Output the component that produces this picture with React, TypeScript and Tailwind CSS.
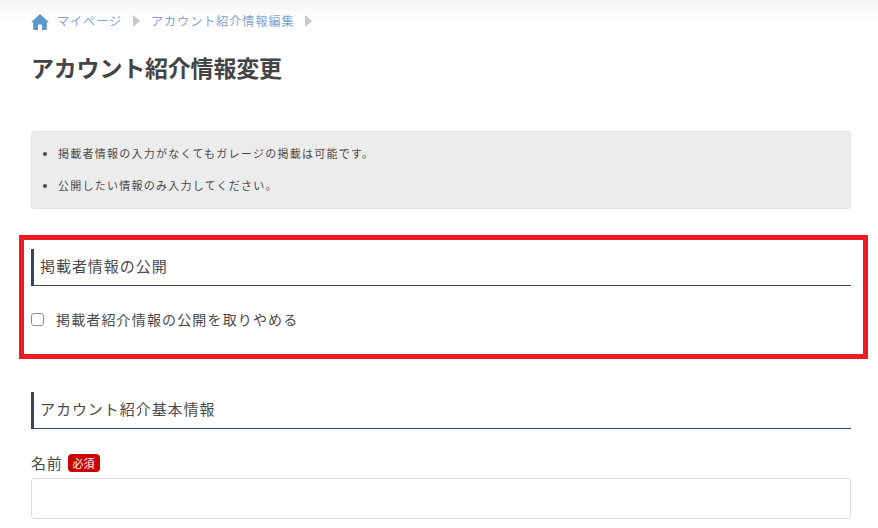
import React from "react";

const jp = "font-['Noto_Sans_CJK_JP','Noto_Sans',sans-serif]";

const Caret: React.FC = () => (
  <svg viewBox="0 0 7 12" className="mb-[2px] h-[12px] w-[7px] shrink-0 fill-[#c4c9d0]">
    <path d="M0 0 L7 6 L0 12 Z" />
  </svg>
);

const SectionHeading: React.FC<{ title: string }> = ({ title }) => (
  <h2 className="flex h-[37px] items-center border-b border-l-[3px] border-b-[#34495e] border-l-[#34495e] pb-[4px] pl-[6px] text-[15px] leading-none font-normal tracking-[0.95px] text-[#4a4a4a]">
    {title}
  </h2>
);

const App: React.FC = () => {
  return (
    <div className={`${jp} h-[528px] overflow-hidden bg-white text-[#4a4a4a]`}>
      <div className="h-[131px] bg-gradient-to-b from-[#f6f6f8] to-white to-[22px] px-[31px] pt-[13px]">
        <nav className="flex h-[18px] items-center text-[12px] leading-none tracking-[1.05px] text-[#7fa4cf]">
          <svg viewBox="0 0 18 16" className="mr-[8px] mb-[1px] h-[16px] w-[18px] fill-[#5c97cc]">
            <path d="M9 0 L18 8.2 L15.8 8.2 L15.8 16 L11 16 L11 10.5 L7 10.5 L7 16 L2.2 16 L2.2 8.2 L0 8.2 Z" />
          </svg>
          <span className="pb-[2px]">マイページ</span>
          <span className="mx-[11px] flex"><Caret /></span>
          <span className="pb-[2px]">アカウント紹介情報編集</span>
          <span className="ml-[10px] flex"><Caret /></span>
        </nav>
        <h1 className="mt-[21px] text-[23px] leading-[30px] font-bold tracking-[-0.2px] text-[#444]">
          アカウント紹介情報変更
        </h1>
      </div>

      <div className="mr-[27px] ml-[31px] h-[78px] rounded-[3px] border border-[#e4e4e4] bg-[#ececec] pt-[6px] pl-[26px] text-[11px] leading-[16px] tracking-[1.25px] text-[#4a4a4a]">
        <ul className="list-disc">
          <li className="h-[32px] pt-[7px]">掲載者情報の入力がなくてもガレージの掲載は可能です。</li>
          <li className="h-[32px] pt-[7px]">公開したい情報のみ入力してください。</li>
        </ul>
      </div>

      <section className="mt-[26px] mr-[10px] ml-[19px] h-[124px] border-[5px] border-[#ed1c24] pt-[9px] pr-[12px] pl-[7px]">
        <SectionHeading title="掲載者情報の公開" />
        <label className="mt-[23px] flex items-center text-[14px] leading-[20px] tracking-[1.15px]">
          <input type="checkbox" className="m-0 mt-[1px] h-[13px] w-[13px] appearance-none rounded-[3px] border border-[#8f8f8f] bg-white" />
          <span className="ml-[12px]">掲載者紹介情報の公開を取りやめる</span>
        </label>
      </section>

      <section className="mt-[33px] mr-[27px] ml-[31px]">
        <SectionHeading title="アカウント紹介基本情報" />
        <div className="mt-[24px] flex h-[20px] items-center text-[15px] leading-none tracking-[0.8px]">
          <span className="pb-[2px]">名前</span>
          <span className="ml-[5px] flex h-[18px] w-[32px] items-center justify-center rounded-[4px] bg-[#c70000] text-[11px] tracking-normal text-white">
            必須
          </span>
        </div>
        <input type="text" className="mt-[5px] block h-[41px] w-full rounded-[3px] border border-[#dddddd] bg-white" />
      </section>
    </div>
  );
};

export default App;
